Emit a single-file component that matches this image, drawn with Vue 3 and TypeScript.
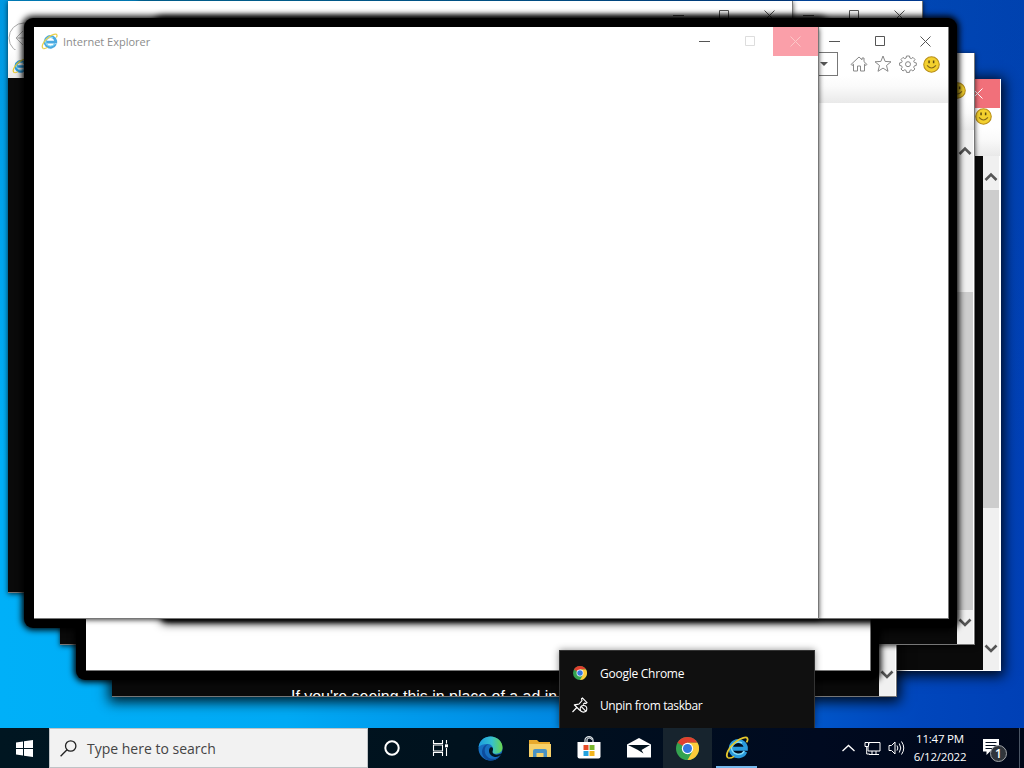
<template>
  <div class="desktop">
    <svg class="defs" width="0" height="0">
      <symbol id="ie" viewBox="0 0 24 24">
        <path d="M20.3 15.600a7.600 7.600 0 1 1 .5-4.400v1.600H8" fill="none" stroke="#2b9bdc" stroke-width="4" />
        <path d="M19.300 15.200A7 7 0 0 1 6.500 11.500 7 7 0 0 1 17 7" fill="none" stroke="#83dcf8" stroke-width="1.500" />
        <path d="M3.200 21.800C-.6 19.600 4 11 11 5.600 16 1.800 21.500.4 22.400 2.400c.6 1.200 0 2.600-.8 4" fill="none" stroke="#e6c82c" stroke-width="1.800" />
        <path d="M3.200 21.800c2 .8 4.200-.4 6-1.500" fill="none" stroke="#e6c82c" stroke-width="1.500" />
      </symbol>
      <symbol id="chrome" viewBox="0 0 24 24">
        <circle cx="12" cy="12" r="12" fill="#35a350" />
        <path d="M12 12 1.600 6A12 12 0 0 1 22.400 6H12Z" fill="#e0402f" />
        <path d="M12 12V6h10.400A12 12 0 0 1 12 24l5.200-9Z" fill="#fccb3a" />
        <path d="M1.600 6 6.800 15 12 12Z" fill="#35a350" />
        <path d="M1.600 6 12 6v6L7 12Z" fill="#e0402f" />
        <path d="M1.600 6 6.800 15 9 12 7 9Z" fill="#35a350" />
        <circle cx="12" cy="12" r="5.900" fill="#fff" />
        <circle cx="12" cy="12" r="4.700" fill="#3478e0" />
      </symbol>
      <symbol id="smile" viewBox="0 0 16 16">
        <circle cx="8" cy="8" r="7.300" fill="#f3d02e" stroke="#b88f1c" />
        <path d="M5.700 4.200v2.600M10 4.200v2.600" stroke="#5d4a10" stroke-width="1.400" />
        <path d="M3.800 8.800q4.200 5 8.400 0" fill="none" stroke="#86691a" />
      </symbol>
    </svg>

    <section
      v-for="w in windows"
      :key="w.id"
      class="window"
      :class="[w.kind, { ring: w.ring, tight: w.tight, deep: w.deep, active: w.red }]"
      :style="{ left: w.x + 'px', top: w.y + 'px' }"
    >
      <div class="frame">
        <header v-if="w.kind !== 'bare'" class="caption">
          <div v-if="w.kind === 'ghost'" class="title">
            <svg width="17" height="17"><use href="#ie" /></svg>
            <span>Internet Explorer</span>
          </div>
          <svg class="cap" viewBox="0 0 46 29"><path d="M18 14.500h11" /></svg>
          <svg class="cap max" viewBox="0 0 46 29"><path d="M18.500 9.500h9v9h-9z" /></svg>
          <svg class="cap close" :class="{ red: w.red }" viewBox="0 0 45 29"><path d="m17.500 9.500 10 10m0-10-10 10" /></svg>
        </header>
        <template v-if="w.kind === 'dark' || w.kind === 'blank'">
          <div class="toolbar">
            <svg class="back" width="32" height="32" viewBox="0 0 32 32">
              <circle cx="16" cy="16" r="15" /><path d="M23 16H9m6-7-7 7 7 7" />
            </svg>
            <div class="address"><i></i></div>
            <svg class="tool" viewBox="0 0 18 18"><path d="M1 9.500 9 2l3 2.800V3h2v3.700l3 2.800-1 1-1.500-1.300V16h-4v-5h-3v5h-4V9.200L2 10.500Z" /></svg>
            <svg class="tool" viewBox="0 0 18 18"><path d="m9 1 2.100 5.400 5.900.4-4.500 3.700 1.500 5.800L9 13.100l-5 3.200 1.500-5.800L1 6.800l5.900-.4Z" /></svg>
            <svg class="tool" viewBox="0 0 18 18">
              <path d="M7.500 1h3l.4 2 1.400.6L14 2.400 16 4.500l-1.300 1.700.6 1.300 2 .4v2.500l-2 .5-.6 1.400 1.200 1.700-2 2-1.700-1.200-1.300.6-.4 2h-3l-.4-2-1.400-.6L4 16l-2-2 1.200-1.700-.6-1.400-2-.5V7.900l2-.4.6-1.300L2 4.500l2-2.100 1.700 1.200L7.100 3Z" />
              <circle cx="9" cy="9.200" r="2.500" />
            </svg>
            <svg class="tool face" viewBox="0 0 16 16"><use href="#smile" /></svg>
          </div>
          <div class="tabs"><svg width="16" height="16"><use href="#ie" /></svg></div>
        </template>
        <div class="page">
          <p v-if="w.text">{{ w.text }}</p>
          <div v-if="w.kind === 'dark'" class="scroll">
            <svg viewBox="0 0 16 18"><path d="m2.500 12 5.500-5.500 5.500 5.500" /></svg>
            <div class="track"><div :style="{ marginTop: w.thumb + 'px' }"></div></div>
            <svg viewBox="0 0 16 18"><path d="m2.500 6.500 5.500 5.500 5.500-5.500" /></svg>
          </div>
        </div>
      </div>
    </section>

    <nav class="menu">
      <div>
        <svg width="14" height="14"><use href="#chrome" /></svg>
        <span class="open">Google Chrome</span>
      </div>
      <div>
        <svg width="16" height="16" viewBox="0 0 16 16" fill="none" stroke="#fff" stroke-width="1.100">
          <path d="m.5 15 4.300-4.500M2 7.500l6 6M3 7.800c1.500-.6 2.800-.3 4-.7L10 3.500 9.500 1.800 10.500 1l4.500 4.600-1 .8-1.500-.3-1.500 1.400" />
          <circle cx="11.500" cy="11.800" r="3.300" /><path d="m9.200 9.500 4.600 4.600" />
        </svg>
        <span class="unpin">Unpin from taskbar</span>
      </div>
    </nav>

    <footer class="taskbar">
      <div class="start">
        <svg width="17" height="17" viewBox="0 0 17 17" fill="#fff"><path d="M0 2.500 7 1.500V8H0ZM8 1.300 17 0v8H8ZM0 9h7v6.500l-7-1ZM8 9h9v8l-9-1.300Z" /></svg>
      </div>
      <div class="search">
        <svg width="17" height="17" viewBox="0 0 17 17" fill="none" stroke="#222" stroke-width="1.300"><circle cx="10.700" cy="6" r="5.200" /><path d="M7 9.700.6 16.300" /></svg>
        <span>Type here to search</span>
      </div>
      <div class="item nudge"><svg width="18" height="18" viewBox="0 0 18 18"><circle cx="9" cy="9" r="6.700" fill="none" stroke="#fff" stroke-width="2" /></svg></div>
      <div class="item nudge">
        <svg width="18" height="16" viewBox="0 0 18 16" fill="none" stroke="#fff" stroke-width="1.100">
          <path d="M1.500 0v3.500h9V0M1.500 16v-3.500h9V16M1.500 5h9v6h-9zM14.500 0v3.500M14.500 8v8" /><path d="M13 4.300h3v3h-3z" fill="#fff" stroke="none" />
        </svg>
      </div>
      <div class="item">
        <svg width="25" height="25" viewBox="0 0 25 25">
          <defs>
            <linearGradient id="edgeTop"><stop stop-color="#1c9ddf" /><stop offset=".55" stop-color="#35c1d0" /><stop offset="1" stop-color="#6ad64b" /></linearGradient>
          </defs>
          <circle cx="12.500" cy="12.500" r="12" fill="#176fc1" />
          <path d="M.6 11C1.500 4.500 6.500.5 12.500.5c7 0 12 5 12 11 0 4-3 6.200-6.500 6.200-2.500 0-4.500-1-3.500-2.500 1.400-2.300.4-6.700-4.500-7.200C6.500 7.600 2.500 9 .6 11Z" fill="url(#edgeTop)" />
          <path d="M10.500 8.200c-5 2.200-5 9.500-.5 13 3.500 2.700 9 2 12.500-2A12 12 0 0 1 11 24.400C5 23 2 16.500 5.500 11c1.200-1.800 3-2.700 5-2.800Z" fill="#0d4c9e" />
          <path d="M11.500 12.500c1-2 3.500-1.500 3.500.5 0 2-1.500 3.500 1 5 2 1.200 5 .8 8-1-1.500 3-5 4.500-8 3.800-4-1-6-5-4.500-8.300Z" fill="#03151f" />
        </svg>
      </div>
      <div class="item">
        <svg width="22" height="19" viewBox="0 0 22 19">
          <path d="M0 1h8l2 2h11v14H0Z" fill="#e8a92c" /><path d="M0 5h22v13H0Z" fill="#f6d069" />
          <path d="M4 18v-6q0-2 2-2h10q2 0 2 2v6h-3.500v-4h-7v4Z" fill="#4a92c4" />
        </svg>
      </div>
      <div class="item">
        <svg width="24" height="24" viewBox="0 0 24 24">
          <path d="M8 7V4a4 3.300 0 0 1 8 0v3M10 7V3.500q2-3 5 0" fill="none" stroke="#dfe6e9" stroke-width="1.200" />
          <path d="M.5 6h23v14.500q0 2-2 2h-19q-2 0-2-2Z" fill="#fff" />
          <path d="M6.500 9h5v5h-5z" fill="#e64b26" /><path d="M12.500 9h5v5h-5z" fill="#79b72d" /><path d="M6.500 15h5v5h-5z" fill="#23a2df" /><path d="M12.500 15h5v5h-5z" fill="#f3b51d" />
        </svg>
      </div>
      <div class="item">
        <svg width="24" height="20" viewBox="0 0 24 20"><path d="M0 6.500 12 0l12 6.500V19.500H0Z" fill="#fff" /><path d="M1 7h22l-8.500 5 2 3.500-6-3.700Z" fill="#03131f" /></svg>
      </div>
      <div class="item hot"><svg width="23" height="23"><use href="#chrome" /></svg></div>
      <div class="item running"><svg width="24" height="24"><use href="#ie" /></svg></div>
      <div class="tray">
        <svg width="13" height="8" viewBox="0 0 13 8"><path d="m.5 7 6-5.500 6 5.500" stroke-width="1.300" /></svg>
        <svg class="net" width="17" height="15" viewBox="0 0 17 15"><path d="M5 3.500V1.500h11v8.500H4V6M8 10v3M12 10v3M5 13.500h10M1 1.500h3.500v4H1zM2.700 5.500V13h3" /></svg>
        <svg class="vol" width="17" height="16" viewBox="0 0 17 16"><path d="M1 5.500h2.500L7 2v12l-3.500-3.500H1ZM9 5.500q1.700 2.500 0 5M11.300 3.500q3 4.500 0 9M13.500 1.500q4.500 6.500 0 13" /></svg>
        <div class="clock"><span>11:47 PM</span><span>6/12/2022</span></div>
        <div class="notify">
          <svg width="18" height="18" viewBox="0 0 18 18"><path d="M1 1h16v12.500H8L4.500 17v-3.500H1Z" fill="#fff" stroke="none" /><path d="M3.500 4.500h11M3.500 7.500h11M3.500 10.500h7" stroke="#061223" /></svg>
          <b>1</b>
        </div>
      </div>
    </footer>
  </div>
</template>

<script setup lang="ts">
interface Win {
  id: number
  x: number
  y: number
  kind: 'dark' | 'blank' | 'ghost' | 'bare'
  ring?: boolean
  tight?: boolean
  deep?: boolean
  red?: boolean
  thumb?: number
  text?: string
}

// back to front
const windows: Win[] = [
  { id: 1, x: 138, y: 1, kind: 'dark', thumb: 0 },
  { id: 2, x: 8, y: 1, kind: 'dark', thumb: 0 },
  { id: 3, x: 216, y: 79, kind: 'dark', deep: true, red: true, thumb: 4 },
  { id: 4, x: 112, y: 105, kind: 'dark', deep: true, thumb: 0, text: "If you're seeing this in place of a ad in" },
  { id: 5, x: 60, y: 53, kind: 'dark', thumb: 0 },
  { id: 6, x: 34, y: 27, kind: 'bare', ring: true },
  { id: 7, x: 190, y: 53, kind: 'dark', thumb: 132 },
  { id: 8, x: 164, y: 27, kind: 'bare', ring: true },
  { id: 9, x: 86, y: 79, kind: 'blank', ring: true },
  { id: 10, x: 164, y: 27, kind: 'blank', tight: true },
  { id: 11, x: 34, y: 27, kind: 'ghost', red: true },
]
</script>

<style>
body {
  overflow: hidden;
}
</style>

<style scoped>
* {
  box-sizing: border-box;
}
.desktop {
  position: relative;
  width: 1024px;
  height: 768px;
  overflow: hidden;
  display: flex;
  flex-direction: column;
  justify-content: flex-end;
  font-family: 'Open Sans', 'Noto Sans', sans-serif;
  background:
    linear-gradient(180deg, rgba(0, 72, 150, 0.22), transparent 60%),
    linear-gradient(90deg, #00b0f8 0, #00aaf5 28%, #008ae4 54%, #0058cc 78%, #0046bc 90%, #0040b6 100%);
}
.defs {
  position: absolute;
}
.window {
  position: absolute;
  width: 785px;
  height: 592px;
  box-shadow: 0 1px 5px rgba(0, 0, 0, 0.75);
}
.window.deep {
  box-shadow: 0 2px 12px 3px rgba(0, 0, 0, 0.85);
}
.window.ring::before {
  content: '';
  position: absolute;
  inset: -9px -8px -9px -10px;
  border-radius: 9px;
  background: #000;
  box-shadow: 0 0 6px 2px #000;
}
.window.tight {
  box-shadow: 0 2px 9px 2px #000, 0 1px 5px 1px #000;
}
.frame {
  position: relative;
  height: 100%;
  display: flex;
  flex-direction: column;
  background: #fff;
  border: 1px solid #777;
  border-width: 0 1px 1px 0;
}
.deep.active .frame {
  border-color: #fff;
}
.caption {
  height: 29px;
  flex: none;
  display: flex;
  justify-content: flex-end;
}
.title {
  display: flex;
  align-items: center;
  gap: 5px;
  margin-right: auto;
  padding-left: 7px;
  color: #8c8c8c;
  font-size: 11px;
}
.title svg {
  opacity: 0.85;
}
.cap {
  width: 46px;
  height: 29px;
  fill: none;
  stroke: #555;
}
.close {
  width: 45px;
}
.close.red {
  background: #f1707a;
  stroke: #fff;
}
.ghost .max {
  stroke: #ddd;
}
.ghost .close.red {
  background: #fa9fa9;
  stroke: #fcc8c8;
}
.toolbar {
  height: 24px;
  margin-top: -4px;
  flex: none;
  display: flex;
  align-items: center;
  padding-right: 8px;
}
.back {
  flex: none;
  fill: none;
  stroke: #aaa;
}
.address {
  flex: 1;
  height: 24px;
  margin-right: 12px;
  border: 1px solid #777;
  display: flex;
  justify-content: flex-end;
  align-items: center;
  padding-right: 9px;
}
.address i {
  border: 4px solid transparent;
  border-top-color: #555;
  border-bottom: 0;
}
.tool {
  width: 18px;
  height: 18px;
  margin-right: 6.500px;
  fill: none;
  stroke: #888;
}
.face {
  width: 17px;
  height: 17px;
  margin-right: 0;
}
.tabs {
  height: 28px;
  flex: none;
  padding: 7px 4px 0;
  background: linear-gradient(#fff, #fafafa 40%, #e9e9e9);
}
.blank .tabs {
  height: 27px;
}
.page {
  flex: 1;
  min-height: 0;
  display: flex;
  justify-content: flex-end;
}
.dark .page {
  background: #0a0a0a;
}
.page p {
  flex: 1;
  align-self: flex-end;
  height: 9px;
  margin: 0;
  padding-left: 179px;
  overflow: hidden;
  color: #fff;
  font: 15.950px/20px 'Liberation Sans', sans-serif;
  white-space: nowrap;
}
.scroll {
  width: 17px;
  flex: none;
  display: flex;
  flex-direction: column;
  padding: 12px 0 13px;
  background: #f0f0f0;
  border-right: 1px solid #fff;
}
.scroll svg {
  width: 16px;
  height: 18px;
  flex: none;
  fill: none;
  stroke: #555;
  stroke-width: 2.600;
}
.track {
  flex: 1;
}
.track div {
  height: 318px;
  background: #cdcdcd;
}
.menu {
  position: absolute;
  left: 559px;
  top: 650px;
  width: 256px;
  height: 78px;
  padding-top: 6px;
  background: #101010;
  border: 1px solid #333;
  border-bottom: 0;
  box-shadow: 0 0 7px rgba(0, 0, 0, 0.45);
  color: #fff;
  font-size: 12px;
}
.menu div {
  height: 32px;
  display: flex;
  align-items: center;
}
.menu svg {
  width: 16px;
  margin: 0 12px;
}
.open {
  letter-spacing: -0.250px;
}
.unpin {
  letter-spacing: -0.380px;
}
.taskbar {
  position: relative;
  height: 40px;
  display: flex;
  background: linear-gradient(90deg, #001621, #00121e 45%, #000a20 80%, #000718);
}
.start {
  width: 48px;
  display: grid;
  place-items: center;
}
.search {
  width: 319px;
  margin-left: 1px;
  display: flex;
  align-items: center;
  gap: 10px;
  padding-left: 10px;
  background: #f2f2f2;
  border: 1px solid #bfc3c6;
  color: #444;
  font-size: 14px;
}
.item {
  width: 49.200px;
  display: grid;
  place-items: center;
}
.nudge {
  padding-right: 2px;
}
.hot {
  background: #17242e;
}
.running {
  position: relative;
}
.running::after {
  content: '';
  position: absolute;
  left: 4px;
  right: 5px;
  bottom: 0;
  height: 2px;
  background: #76b9ed;
}
.tray {
  margin-left: auto;
  margin-right: 4px;
  padding-right: 11px;
  border-right: 1px solid #4a5564;
  display: flex;
  align-items: center;
  color: #fff;
}
.tray svg {
  fill: none;
  stroke: #fff;
}
.net {
  margin-left: 9px;
}
.vol {
  margin-left: 7px;
}
.clock {
  width: 52px;
  margin: 0 16px 0 9px;
  display: flex;
  flex-direction: column;
  align-items: center;
  font-size: 11.500px;
  letter-spacing: -0.200px;
  line-height: 18px;
  white-space: nowrap;
}
.notify {
  position: relative;
  width: 26px;
  height: 24px;
}
.notify svg {
  margin-top: 2px;
}
.notify b {
  position: absolute;
  left: 8px;
  top: 9px;
  width: 17px;
  height: 17px;
  border: 1px solid #a0a4a8;
  border-radius: 50%;
  background: #30353b;
  font-size: 12px;
  font-weight: 600;
  line-height: 15px;
  text-align: center;
}
</style>
